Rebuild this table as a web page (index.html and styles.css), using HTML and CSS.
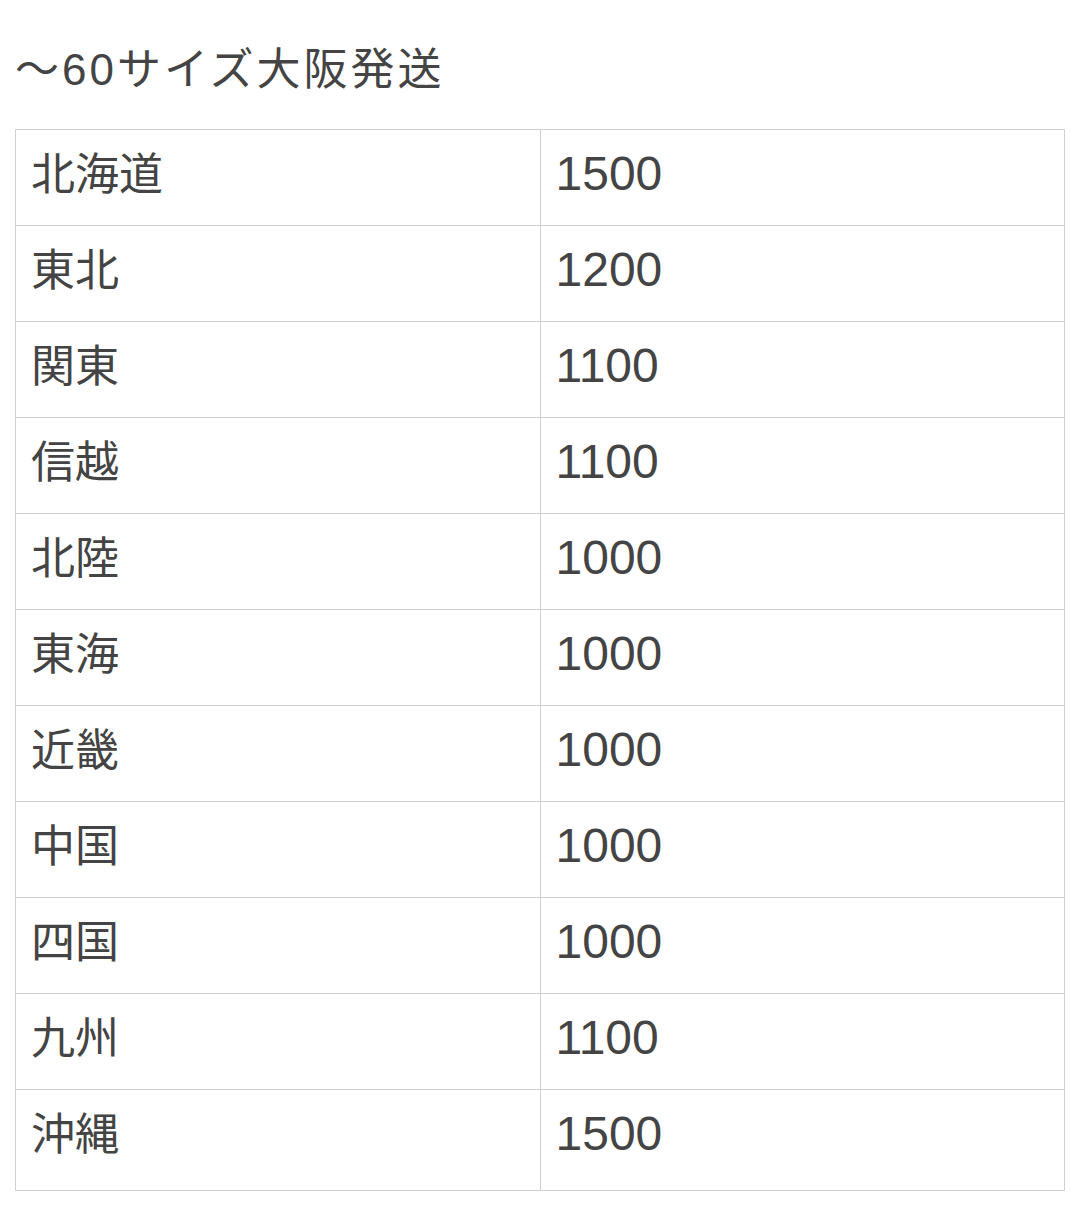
FILE: index.html
```html
<!DOCTYPE html>
<html lang="ja">
<head>
<meta charset="utf-8">
<link rel="stylesheet" href="styles.css">
</head>
<body>
<div class="page">
  <h1 class="title">〜60サイズ大阪発送</h1>
  <table class="rates">
    <tbody>
      <tr><td class="region">北海道</td><td class="price">1500</td></tr>
      <tr><td class="region">東北</td><td class="price">1200</td></tr>
      <tr><td class="region">関東</td><td class="price">1100</td></tr>
      <tr><td class="region">信越</td><td class="price">1100</td></tr>
      <tr><td class="region">北陸</td><td class="price">1000</td></tr>
      <tr><td class="region">東海</td><td class="price">1000</td></tr>
      <tr><td class="region">近畿</td><td class="price">1000</td></tr>
      <tr><td class="region">中国</td><td class="price">1000</td></tr>
      <tr><td class="region">四国</td><td class="price">1000</td></tr>
      <tr><td class="region">九州</td><td class="price">1100</td></tr>
      <tr class="last"><td class="region">沖縄</td><td class="price">1500</td></tr>
    </tbody>
  </table>
</div>
</body>
</html>
```

FILE: styles.css
```css
html, body {
  margin: 0;
  padding: 0;
  background: #ffffff;
}

body {
  font-family: "Liberation Sans", "Noto Sans CJK JP", sans-serif;
  color: #444444;
}

.page {
  padding: 37px 21px 0 15px;
}

.title {
  margin: 0 0 26px 0;
  font-size: 44px;
  font-weight: normal;
  line-height: 66px;
  height: 66px;
  letter-spacing: 3px;
}

.rates {
  width: 1050px;
  border-collapse: collapse;
  table-layout: fixed;
}

.rates td {
  width: 50%;
  height: 96px;
  box-sizing: border-box;
  border: 1px solid #d0d0d0;
  padding: 17px 15px 0 15px;
  vertical-align: top;
  font-size: 48px;
  line-height: 54px;
}

.rates td.region {
  font-size: 44px;
  padding-top: 18px;
}

.rates tr.last td {
  height: 101px;
}
```
